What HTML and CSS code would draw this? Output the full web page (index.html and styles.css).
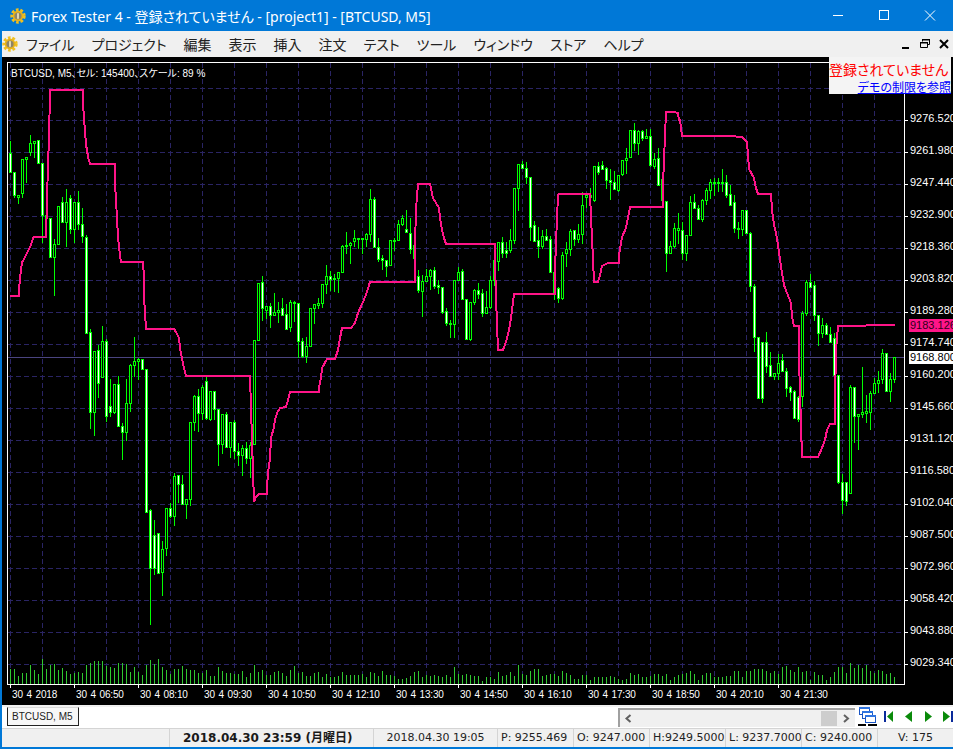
FILE: index.html
```html
<!DOCTYPE html>
<html lang="ja">
<head>
<meta charset="utf-8">
<title>Forex Tester 4</title>
<link rel="stylesheet" href="styles.css">
</head>
<body>
<svg class="defs" width="0" height="0" aria-hidden="true">
  <symbol id="gear" viewBox="0 0 16 16">
    <circle cx="8" cy="8" r="6.2" fill="none" stroke="#f0c020" stroke-width="3" stroke-dasharray="2.6 1.8"/>
    <circle cx="8" cy="8" r="5.4" fill="#e8b41c"/>
    <circle cx="8" cy="8" r="3.6" fill="#8d8468"/>
    <rect x="7.2" y="5.2" width="1.6" height="5.6" fill="#f4ecc8"/>
  </symbol>
</svg>
<div class="window">
  <header class="titlebar">
    <svg class="title-icon"><use href="#gear"/></svg>
    <span class="title-text">Forex Tester 4 - 登録されていません - [project1] - [BTCUSD, M5]</span>
    <div class="win-controls">
      <svg class="win-btn" viewBox="0 0 46 31"><path d="M18 15.5h10" stroke="#fff" fill="none"/></svg>
      <svg class="win-btn" viewBox="0 0 46 31"><rect x="18.5" y="10.5" width="9" height="9" stroke="#fff" fill="none"/></svg>
      <svg class="win-btn" viewBox="0 0 46 31"><path d="M18 10.5l10 10M28 10.5l-10 10" stroke="#fff" fill="none"/></svg>
    </div>
  </header>
  <nav class="menubar">
    <svg class="menu-icon"><use href="#gear"/></svg>
    <span class="menu-item">ファイル</span>
    <span class="menu-item">プロジェクト</span>
    <span class="menu-item">編集</span>
    <span class="menu-item">表示</span>
    <span class="menu-item">挿入</span>
    <span class="menu-item">注文</span>
    <span class="menu-item">テスト</span>
    <span class="menu-item">ツール</span>
    <span class="menu-item">ウィンドウ</span>
    <span class="menu-item">ストア</span>
    <span class="menu-item">ヘルプ</span>
    <div class="mdi-controls">
      <svg width="12" height="12" viewBox="0 0 12 12"><rect x="2" y="9" width="7" height="2" fill="#000"/></svg>
      <svg width="12" height="12" viewBox="0 0 12 12"><path d="M3.5 3.5V1.5h7v5h-2M1.5 4.5h7v5h-7z" fill="none" stroke="#000"/><path d="M1 4h8v1.6H1zM3 1h8v1.4H3z" fill="#000"/></svg>
      <svg width="12" height="12" viewBox="0 0 12 12"><path d="M2 2l8 8M10 2l-8 8" stroke="#000" stroke-width="2" fill="none"/></svg>
    </div>
  </nav>
  <main class="workspace">
    <div class="notice">
      <div class="notice-title">登録されていません</div>
      <a class="notice-link" href="#">デモの制限を参照</a>
    </div>
    <div class="chart-row">
      <div class="plot">
        <svg id="chart" class="chart" viewBox="8 63 896 621" width="896" height="621"></svg>
        <div class="caption">BTCUSD, M5、セル: 145400、スケール: 89 %</div>
      </div>
      <div class="price-axis">
        <span class="price">9276.520</span><span class="price">9261.980</span><span class="price">9247.440</span>
        <span class="price">9232.900</span><span class="price">9218.360</span><span class="price">9203.820</span>
        <span class="price">9189.280</span><span class="price">9174.740</span><span class="price">9160.200</span>
        <span class="price">9145.660</span><span class="price">9131.120</span><span class="price">9116.580</span>
        <span class="price">9102.040</span><span class="price">9087.500</span><span class="price">9072.960</span>
        <span class="price">9058.420</span><span class="price">9043.880</span><span class="price">9029.340</span>
        <span class="tag tag-line">9183.126</span>
        <span class="tag tag-now">9168.800</span>
      </div>
    </div>
    <div class="time-axis">
      <span class="time">30 4 2018</span><span class="time">30 4 06:50</span><span class="time">30 4 08:10</span>
      <span class="time">30 4 09:30</span><span class="time">30 4 10:50</span><span class="time">30 4 12:10</span>
      <span class="time">30 4 13:30</span><span class="time">30 4 14:50</span><span class="time">30 4 16:10</span>
      <span class="time">30 4 17:30</span><span class="time">30 4 18:50</span><span class="time">30 4 20:10</span>
      <span class="time">30 4 21:30</span>
    </div>
  </main>
  <div class="tabrow">
    <div class="tab">BTCUSD, M5</div>
    <div class="scrollbar">
      <svg class="scroll-btn" width="18" height="17" viewBox="0 0 18 17"><path d="M10.5 5l-4 3.5 4 3.5" fill="none" stroke="#606060" stroke-width="2"/></svg>
      <div class="scroll-track"><div class="scroll-thumb"></div></div>
      <svg class="scroll-btn" width="18" height="17" viewBox="0 0 18 17"><path d="M7 5l4 3.5-4 3.5" fill="none" stroke="#606060" stroke-width="2"/></svg>
    </div>
    <svg class="tile-icon" width="20" height="20" viewBox="0 0 20 20">
      <g fill="#fff" stroke="#1a56c4"><rect x="1.5" y="0.5" width="10" height="7"/><rect x="4.5" y="4.5" width="10" height="7"/><rect x="7.5" y="8.5" width="10" height="7"/></g>
      <g fill="#2f74e0"><rect x="1" y="0" width="11" height="2"/><rect x="4" y="4" width="11" height="2"/><rect x="7" y="8" width="11" height="2"/></g>
      <path d="M0 18h8M10 18h9" stroke="#000" stroke-width="2" fill="none"/>
    </svg>
    <div class="nav-buttons">
      <svg width="10" height="11" viewBox="0 0 10 11"><rect x="0" y="0" width="2" height="11" fill="#0a2a9a"/><path d="M9 0v11L3 5.500z" fill="#0a8a0a"/></svg>
      <svg width="8" height="11" viewBox="0 0 8 11"><path d="M7 0v11L0 5.500z" fill="#0a8a0a"/></svg>
      <svg width="8" height="11" viewBox="0 0 8 11"><path d="M1 0v11l7-5.500z" fill="#0a8a0a"/></svg>
      <svg width="10" height="11" viewBox="0 0 10 11"><path d="M0 0v11l7-5.500z" fill="#0a8a0a"/><rect x="8" y="0" width="2" height="11" fill="#0a2a9a"/></svg>
    </div>
  </div>
  <footer class="statusbar">
    <div class="cell"></div>
    <div class="cell cell-date">2018.04.30 23:59 (月曜日)</div>
    <div class="cell cell-center">2018.04.30 19:05</div>
    <div class="cell">P: 9255.469</div>
    <div class="cell">O: 9247.000</div>
    <div class="cell">H:9249.5000</div>
    <div class="cell">L: 9237.7000</div>
    <div class="cell">C: 9240.000</div>
    <div class="cell cell-center">V: 175</div>
  </footer>
</div>
<script src="chart.js"></script>
</body>
</html>
```
FILE: styles.css
```css
* { box-sizing: border-box; }
html, body { margin: 0; padding: 0; background: #000; }
body { width: 953px; height: 749px; overflow: hidden; }
.defs { position: absolute; }
.window {
  width: 953px; height: 749px; display: flex; flex-direction: column;
  border-left: 2px solid #0078d7; border-bottom: 2px solid #0078d7; background: #f0f0f0; overflow: hidden;
}

.titlebar {
  height: 31px; flex: none; display: flex; align-items: center; background: #0078d7; color: #fff;
  margin-left: -2px; padding-left: 10px;
  font: 14px "Noto Sans", "Noto Sans CJK JP", sans-serif; font-feature-settings: "palt";
}
.title-icon { width: 16px; height: 16px; margin-right: 5px; }
.title-text { white-space: nowrap; }
.win-controls { margin-left: auto; display: flex; }
.win-btn { width: 46px; height: 31px; display: block; }

.menubar {
  height: 26px; flex: none; display: flex; align-items: center; gap: 17px; background: #f0f0f0; color: #222;
  font: 14px "Noto Sans CJK JP", sans-serif; font-feature-settings: "palt"; position: relative;
}
.menu-icon { width: 16px; height: 16px; margin-right: -9px; flex: none; }
.menu-item { white-space: nowrap; }
.mdi-controls { margin-left: auto; display: flex; gap: 7px; padding-right: 3px; }

.workspace { height: 648px; flex: none; background: #000; position: relative; padding: 5px 0 0 5px; color: #fff; }
.notice {
  position: absolute; top: 0; left: 827px; width: 122px; height: 37px; background: #f0f0f0; background: #f4f4f4;
  text-align: right; font-family: "Noto Sans CJK JP", sans-serif; font-feature-settings: "palt"; overflow: hidden; z-index: 2;
}
.notice-title { color: #ff0000; font-size: 14px; line-height: 20px; margin-top: 2px; padding-right: 3px; white-space: nowrap; }
.notice-link { display: block; color: #0000ff; font-size: 12px; line-height: 15px; white-space: nowrap; }

.chart-row { display: flex; height: 623px; }
.plot { width: 898px; height: 623px; border: 1px solid #fff; border-bottom-width: 1px; position: relative; flex: none; }
.chart { display: block; overflow: visible; }
.caption {
  position: absolute; left: 3px; top: 2px; font: 10px "Liberation Sans", "Noto Sans CJK JP", sans-serif;
  font-feature-settings: "palt"; white-space: nowrap; color: #fff;
}

.price-axis {
  flex: none; width: 48px; position: relative; padding: 50px 0 0 5px; display: flex; flex-direction: column;
  font: 11px "Liberation Sans", sans-serif; overflow: hidden;
}
.price { height: 32px; flex: none; line-height: 13px; white-space: nowrap; }
.tag { position: absolute; left: 4px; width: 44px; height: 13px; line-height: 13px; padding-left: 1px; white-space: nowrap; overflow: hidden; }
.tag-line { top: 257px; background: #ff1488; color: #30001a; }
.tag-now { top: 289px; background: #fff; color: #000; }

.time-axis { display: flex; padding: 2px 0 0 5px; font: 10px "Liberation Sans", sans-serif; }
.time { width: 64px; flex: none; line-height: 14px; white-space: nowrap; word-spacing: 1px; letter-spacing: -0.15px; padding-top: 1px; }

.tabrow {
  height: 22px; flex: none; margin-top: 2px; background: #fff; display: flex; align-items: flex-start;
  border-bottom: 1px solid #d4d4d4;
}
.tab {
  margin-left: 5px; width: 72px; height: 19px; border: 1px solid #222; border-top: 1px solid #d8d8d8; background: #f7f7f7; color: #222;
  font: 10px/17px "Liberation Sans", sans-serif; padding-left: 4px;
}
.scrollbar {
  margin-left: 539px; margin-top: 1px; width: 239px; height: 19px; border-top: 2px solid #a0a0a0; border-left: 2px solid #a0a0a0; background: #f0f0f0;
  display: flex; align-items: center;
}
.scroll-btn { flex: none; }
.scroll-track { flex: 1; height: 15px; display: flex; justify-content: flex-end; }
.scroll-thumb { width: 16px; height: 15px; background: #cdcdcd; }
.tile-icon { flex: none; margin: 0 0 0 3px; }
.nav-buttons { display: flex; align-items: center; gap: 11px; margin-left: 6px; margin-top: 4px; height: 11px; }

.statusbar {
  flex: 1; display: grid; grid-template-columns: 168px 204px 124px repeat(5, 76px) 1fr;
  background: #f0f0f0; font: 11px/18px "DejaVu Sans", "Noto Sans CJK JP", sans-serif; color: #222;
}
.cell { border-right: 1px solid #d4d4d4; padding-left: 3px; overflow: hidden; white-space: nowrap; }
.cell:last-child { border-right: 0; }
.cell-center { text-align: center; padding-left: 0; }
.cell-date { font-weight: 700; font-size: 12px; color: #1a1a1a; padding-left: 13px; }
```
FILE: chart.js
```js
// Candle rows: [bodyTop, bodyBottom, wickHigh, wickLow, white] in 3x coordinates of each chart section.
var sections = [
  { y0: 130, rows: [
    [68,125,33,0,1],[125,195,0,200,1],[195,200,0,220,0],[88,190,0,200,0],[80,88,0,155,0],[38,65,15,75,0],[32,38,0,80,0],[30,100,0,0,1],
    [100,255,0,335,1],[255,265,0,0,0],[265,382,0,0,1],[343,382,328,495,0],[229,343,0,0,0],[215,277,202,0,1],[217,277,178,347,0],[205,298,195,310,1],
    [217,298,0,335,0],[215,283,183,298,1],[283,318,235,335,1],[320,610,316,0,1],[607,847,598,893,1],[664,847,0,915,0],[661,760,645,800,1],[634,742,588,0,0],
    [634,859,628,873,1],[829,847,748,858,1],[763,845,0,850,0],[763,889,739,0,1],[889,907,880,987,1],[820,907,748,930,0],[706,820,703,842,0],[694,706,622,739,0],
    [688,694,685,747,0],[688,718,0,0,1],[718,1145,0,0,1],[1141,1313,1138,1481,1],[1216,1313,1171,1331,1],[1210,1330,0,0,1],[1258,1327,1233,1394,0],[1135,1255,0,1275,0],
    [1135,1157,1120,1160,1],[1039,1157,1030,1185,0],[1036,1063,0,1115,1],[1063,1123,1035,0,1],[1108,1123,0,1163,0],[877,1108,0,1125,0],[799,877,796,900,0],[799,850,778,903,1],
    [772,850,765,868,0],[754,865,742,868,1],[784,866,0,870,0],[784,838,0,866,1],[838,943,0,1005,1],[853,943,0,968,0],[853,952,847,0,1],[877,952,875,980,0]
  ]},
  { y0: 130, rows: [
    [877,964,870,983,1],[964,976,940,1005,1],[955,976,945,1035,0],[953,985,937,1000,1],[946,985,936,1040,0],[631,942,0,0,0],[460,631,0,0,0],[457,535,438,570,1],
    [529,539,0,565,0],[529,556,520,590,1],[547,556,490,0,0],[541,547,515,575,0],[535,556,505,0,1],[553,598,523,0,1],[517,592,510,603,0],[517,520,512,573,1],
    [520,634,0,680,1],[634,679,624,682,1],[649,679,622,695,0],[535,649,0,0,0],[523,535,522,578,0],[520,526,505,535,0],[463,520,0,530,0],[439,463,405,488,0],
    [439,448,423,480,1],[445,447,433,482,0],[427,445,0,485,0],[349,427,346,0,0],[346,349,307,368,0],[340,346,335,398,0],[325,334,300,347,0],[325,327,0,355,0],
    [325,327,0,368,0],[313,328,308,347,0],[208,313,178,333,0],[208,350,202,0,1],[350,386,325,392,1],[385,391,375,416,1],[391,409,0,437,1],[331,406,0,0,0],
    [329,331,323,360,0],[283,331,270,0,0],[265,283,255,285,0],[298,307,240,0,1],[310,358,265,368,1],[346,385,0,440,1],[439,481,420,485,1],[454,482,435,557,0],
    [439,454,418,0,0],[421,439,418,476,0],[421,467,412,475,1],[466,472,450,490,1],[472,545,0,548,1],[544,580,535,585,1],[579,581,570,620,0],[451,583,0,620,0]
  ]},
  { y0: 100, rows: [
    [517,539,501,540,0],[514,598,508,0,1],[598,718,0,0,1],[607,718,0,720,0],[571,606,568,612,0],[571,581,549,595,1],[580,638,568,648,1],[622,638,573,0,0],
    [541,620,528,623,0],[481,541,0,555,0],[427,482,0,510,0],[427,460,411,471,1],[451,460,427,470,1],[421,451,388,455,0],[265,419,0,429,0],[193,265,0,330,0],
    [193,205,184,0,1],[205,232,186,248,1],[232,380,0,420,1],[376,424,363,0,1],[421,439,381,471,1],[409,439,390,445,0],[409,421,388,0,1],[418,515,408,0,1],
    [515,580,507,596,0],[565,593,562,605,1],[466,593,457,596,0],[448,460,425,498,0],[394,448,388,465,0],[391,418,0,435,1],[403,418,373,425,0],[316,403,277,430,0],
    [285,292,280,322,0],[285,290,265,0,0],[199,299,0,302,0],[199,217,186,223,1],[196,208,184,0,1],[205,241,202,265,1],[241,247,208,296,1],[247,268,214,0,1],
    [226,270,0,273,0],[181,223,0,226,0],[175,181,145,220,0],[91,172,0,0,0],[91,130,70,150,1],[94,130,90,163,0],[94,115,90,120,1],[109,115,88,0,0],
    [109,196,87,198,1],[178,198,160,204,0],[175,256,145,0,1],[238,300,0,304,0],[304,460,0,513,1],[439,460,423,0,0],[385,439,370,440,0],[385,391,340,430,0]
  ]},
  { y0: 100, rows: [
    [391,460,366,478,1],[406,460,0,480,0],[307,406,289,0,0],[307,325,283,0,1],[325,358,315,0,1],[301,358,298,362,0],[271,301,265,312,0],[247,271,238,295,0],
    [247,250,235,285,0],[247,250,235,272,0],[246,248,208,272,0],[247,286,225,291,1],[283,316,255,0,1],[307,385,286,396,1],[385,388,365,413,0],[331,388,0,406,0],
    [331,400,0,0,1],[399,559,397,572,1],[559,712,553,752,1],[712,895,0,0,1],[727,895,0,905,1],[727,799,697,815,1],[796,829,757,0,1],[820,829,0,838,0],
    [790,820,763,838,0],[781,814,762,0,1],[814,865,805,888,1],[862,877,858,900,1],[874,955,870,0,1],[892,958,888,963,1],[640,889,634,917,0],[547,640,541,645,0],
    [547,562,522,0,1],[556,646,544,660,1],[646,700,0,735,1],[676,700,655,711,0],[676,703,670,0,1],[703,727,681,0,1],[715,826,700,828,1],[826,1145,0,1148,1],
    [1145,1200,1122,1240,1],[1145,1202,0,1215,1],[862,1178,856,0,0],[862,949,0,1025,1],[943,949,0,1047,0],[935,943,802,950,0],[934,938,886,965,0],[880,937,874,987,0],
    [850,880,835,0,0],[841,850,813,876,0],[760,838,748,850,0],[760,874,0,0,1],[838,874,820,903,0],[772,838,0,845,0]
  ]}
];

var volumes = [15,15,8,11,11,19,14,10,25,15,19,20,14,16,13,10,11,12,11,19,21,23,23,23,18,17,16,21,21,20,12,17,12,9,19,24,20,25,17,14,
  10,15,15,18,15,14,14,11,11,14,8,8,17,13,11,11,10,10,13,7,11,19,12,14,9,9,12,13,11,8,14,18,11,12,8,8,11,12,
  7,10,7,7,8,12,9,9,9,9,10,7,12,11,8,13,9,9,8,5,5,6,8,12,13,7,9,8,9,8,7,9,7,17,
  10,9,10,9,8,8,3,7,7,5,12,8,9,12,8,19,
  10,9,13,15,15,8,9,10,10,8,13,11,9,5,5,9,9,4,7,7,7,7,8,7,5,4,5,11,9,10,
  7,7,8,10,10,8,10,4,7,9,10,11,13,10,4,9,11,11,7,7,7,8,8,13,13,7,13,13,15,15,15,13,11,13,10,17,18,14,12,17,12,13,4,12,9,9,4,7,12,17,17,11,21,16,19,16,19,13,11,14,13,10,11,7];

var line = [10,296,19,296,19,290,20,279,21,270,22,262,23,261,25,257,27,253,29,249,31,245,33,238,34,237,46,237,47,201,48,163,49,140,50,90,83,90,83,103,84,118,85,131,86,145,87,150,88,157,90,164,
  115,164,115,183,116,200,117,218,118,237,119,246,120,256,121,262,143,262,144,278,144,296,145,313,146,329,174,329,176,332,179,338,180,348,182,358,184,368,186,376,
  250,376,251,408,252,440,253,471,254,502,256,497,259,494,267,494,267,488,268,473,270,458,271,438,274,427,275,420,277,413,280,408,286,407,288,400,290,392,
  319,392,319,387,321,378,322,368,327,359,335,359,338,350,340,338,342,328,351,328,355,323,358,313,363,302,367,292,370,282,415,282,415,245,416,209,418,184,430,184,433,198,439,208,440,218,442,230,444,238,446,244,
  495,244,495,260,496,298,497,324,498,350,503,350,506,342,509,330,511,318,513,302,514,294,555,294,555,270,556,243,557,219,558,195,559,194,590,194,591,217,592,238,594,282,598,282,600,275,602,266,608,263,
  619,263,619,255,622,237,626,228,629,213,630,207,663,207,663,185,664,160,665,136,666,112,674,112,678,113,679,120,680,120,682,136,730,136,742,137,747,142,748,155,749,169,754,178,756,188,758,194,
  771,194,772,210,774,225,776,233,778,245,780,260,782,273,784,285,787,293,791,303,792,317,794,326,799,326,799,358,800,393,801,425,802,457,818,457,822,448,825,440,827,430,830,424,835,424,835,400,836,350,838,326,895,325];

var NS = "http://www.w3.org/2000/svg";
var chart = document.getElementById("chart");

function el(name, attrs) {
  var node = document.createElementNS(NS, name);
  for (var key in attrs) node.setAttribute(key, attrs[key]);
  chart.appendChild(node);
  return node;
}
function rect(x, y, w, h, fill) {
  return el("rect", { x: x, y: y, width: w, height: h, fill: fill, "shape-rendering": "crispEdges" });
}

// Grid
for (var gy = 88; gy <= 664; gy += 32) {
  el("line", { x1: 8, x2: 904, y1: gy + 0.5, y2: gy + 0.5, stroke: "#2a2464", "stroke-dasharray": "5 3", "shape-rendering": "crispEdges" });
}
for (var gx = 10; gx < 904; gx += 32) {
  el("line", { x1: gx + 0.5, x2: gx + 0.5, y1: 63, y2: 684, stroke: "#2a2464", "stroke-dasharray": "5 3", "shape-rendering": "crispEdges" });
}

// Axis ticks
for (var ty = 120; ty <= 664; ty += 32) rect(905, ty, 3, 1, "#fff");
for (var tx = 10; tx <= 778; tx += 64) rect(tx, 685, 1, 3, "#fff");

// Current price line
rect(8, 357, 896, 1, "#4a4480");

// Volumes
volumes.forEach(function (h, i) { rect(10 + 4 * i, 684 - h, 1, h, "#30c830"); });

// Candles
var index = 0;
sections.forEach(function (section) {
  section.rows.forEach(function (row) {
    var px = function (v) { return Math.round(section.y0 + v / 3); };
    var top = px(row[0]), bottom = px(row[1]);
    var high = row[2] ? px(row[2]) : top, low = row[3] ? px(row[3]) : bottom;
    var x = 10 + 4 * index;
    if (bottom <= top) bottom = top + 1;
    rect(x, high, 1, low - high + 1, "#00ff00");
    rect(x - 1, top, 3, bottom - top + 1, "#00ff00");
    if (bottom - top >= 2) rect(x, top + 1, 1, bottom - top - 1, row[4] ? "#ffffff" : "#000000");
    index++;
  });
});

// Indicator line
var points = [];
for (var p = 0; p < line.length; p += 2) points.push(line[p] + "," + line[p + 1]);
el("polyline", { points: points.join(" "), fill: "none", stroke: "#ff1488", "stroke-width": 2, "shape-rendering": "crispEdges" });
```
